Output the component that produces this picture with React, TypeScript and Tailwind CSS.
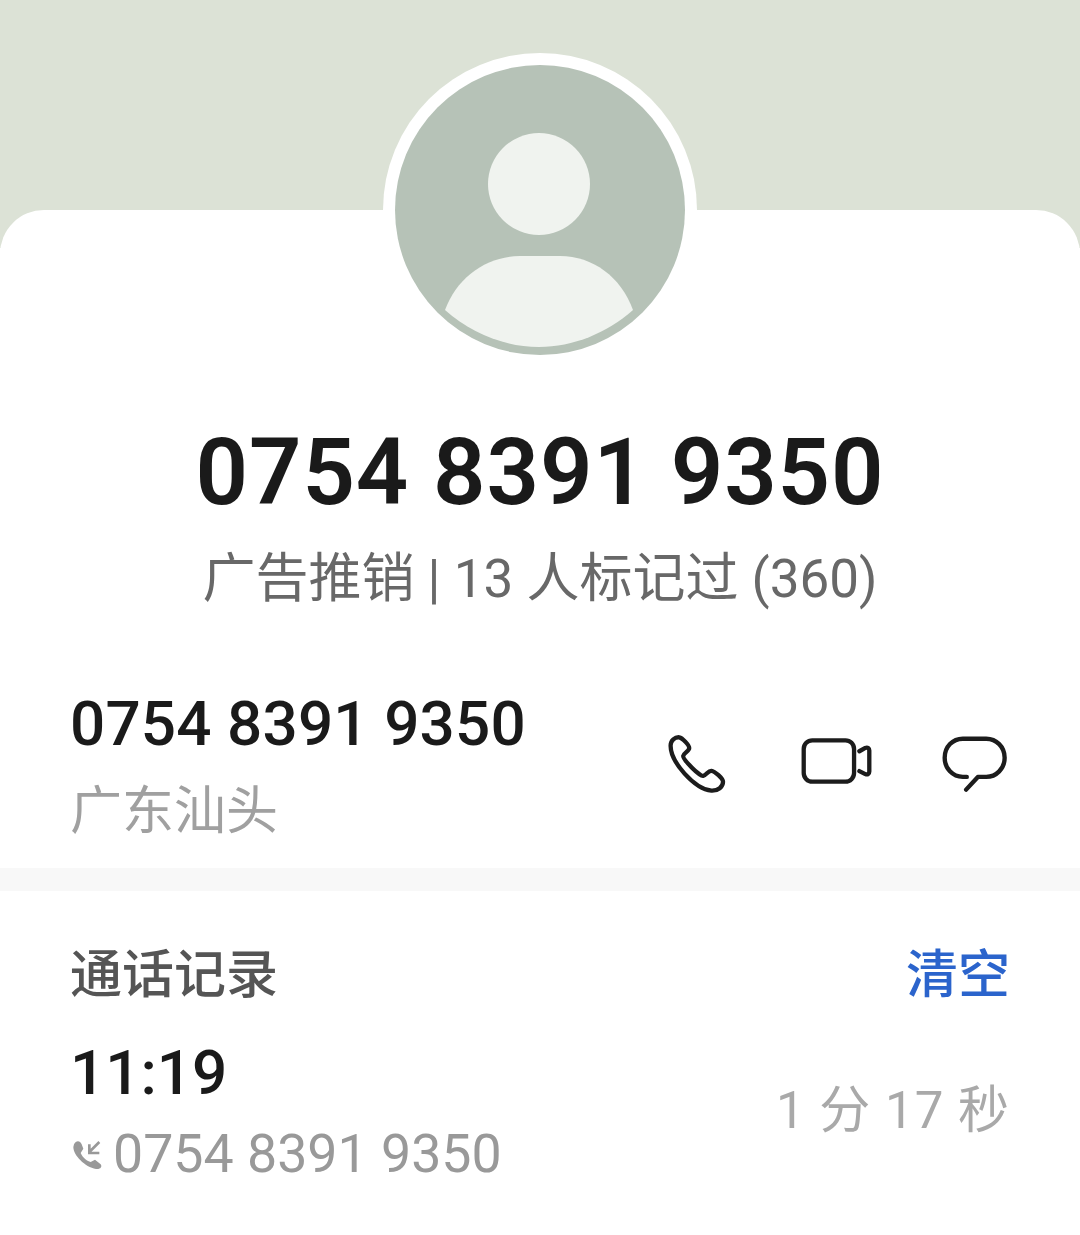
const fontStack = "font-['Roboto','Noto_Sans_CJK_SC',sans-serif]";

function Avatar() {
    return (
        <div className="w-[314px] h-[314px] rounded-full bg-white flex items-center justify-center">
            <svg width="290" height="290" viewBox="0 0 290 290">
                <circle cx="145" cy="145" r="145" fill="#b6c2b7" />
                <circle cx="144" cy="119" r="51" fill="#f0f3ef" />
                <path d="M50 245C62 212 92 191 125 191H165C198 191 226 212 238 245C212 268 178 282 144 282C110 282 76 268 50 245Z" fill="#f0f3ef" />
            </svg>
        </div>
    );
}

function PhoneIcon() {
    return (
        <svg width="67" height="63" viewBox="70 60 200 190" fill="none" stroke="#1c1c1c" strokeWidth="13" strokeLinejoin="round">
            <path d="M92 100C92 85 105 75 118 76C128 78 148 100 148 108C148 118 132 122 130 132C128 142 180 195 190 192C200 190 205 176 215 177C225 178 250 200 250 210C250 225 235 238 215 237C165 232 90 150 92 100Z" />
        </svg>
    );
}

function VideoIcon() {
    return (
        <svg width="73" height="53" viewBox="480 85 220 160" fill="none" stroke="#1c1c1c" strokeWidth="13" strokeLinecap="round" strokeLinejoin="round">
            <rect x="488" y="95" width="152" height="125" rx="26" />
            <path d="M656 128L674 118C681 115 686 119 686 126V189C686 196 681 200 674 197L656 188" />
        </svg>
    );
}

function ChatIcon() {
    return (
        <svg width="67" height="57" viewBox="905 75 200 170" fill="none" stroke="#1c1c1c" strokeWidth="13" strokeLinecap="round" strokeLinejoin="round">
            <path d="M982 200H970C940 200 916 175 916 143C916 110 940 86 970 86H1040C1070 86 1095 110 1095 143C1095 175 1070 200 1040 200H1015L980 238" />
        </svg>
    );
}

function IncomingIcon() {
    return (
        <svg width="35" height="35" viewBox="60 40 105 105">
            <path d="M72 62C78 50 90 50 95 62L100 75L92 88C100 105 112 112 122 115L135 108L152 122C158 130 150 138 138 136C105 130 70 95 70 70Z" fill="#999999" />
            <path d="M148 55L118 85M118 62V88H148" fill="none" stroke="#999999" strokeWidth="8" />
        </svg>
    );
}

export default function App() {
    return (
        <div className={`w-[1080px] h-[1235px] bg-white overflow-hidden ${fontStack}`}>
            {/* Header band */}
            <div className="h-[248px] bg-[#dce2d6]" />

            {/* Card */}
            <div className="-mt-[38px] bg-white rounded-t-[44px] flex flex-col">
                <div className="flex justify-center -mt-[157px]">
                    <Avatar />
                </div>

                <div className="flex flex-col items-center">
                    <h1 className="mt-[48px] text-[92px] leading-[116px] font-semibold text-[#1a1a1a] tracking-[0.9px]">0754 8391 9350</h1>
                    <p className="mt-[16px] text-[53px] leading-[64px] text-[#686868]">广告推销 | 13 人标记过 (360)</p>
                </div>

                <div className="mt-[77px] pl-[70px] pr-[72px] flex items-center justify-between">
                    <div>
                        <p className="text-[62px] leading-[72px] font-medium text-[#1a1a1a] tracking-[0.15px]">0754 8391 9350</p>
                        <p className="mt-[22px] text-[52px] leading-[60px] text-[#a0a0a0]">广东汕头</p>
                    </div>
                    <div className="flex items-center -mt-[4px]">
                        <PhoneIcon />
                        <div className="ml-[71px] mr-[67px]">
                            <VideoIcon />
                        </div>
                        <ChatIcon />
                    </div>
                </div>

                <div className="mt-[26px] h-[23px] bg-[#f8f8f8]" />

                <div className="mt-[55px] px-[70px]">
                    <div className="flex items-center justify-between">
                        <p className="text-[52px] leading-[60px] font-medium text-[#555555]">通话记录</p>
                        <p className="text-[52px] leading-[60px] font-medium text-[#2b64cc]">清空</p>
                    </div>
                    <div className="mt-[32px] flex items-center justify-between">
                        <div>
                            <p className="text-[62px] leading-[70px] font-medium text-[#1a1a1a]">11:19</p>
                            <div className="mt-[16px] flex items-center gap-[8px]">
                                <IncomingIcon />
                                <span className="text-[53.7px] leading-[60px] text-[#999999]">0754 8391 9350</span>
                            </div>
                        </div>
                        <p className="text-[51px] leading-[60px] text-[#a9a9a9] tracking-[1px]">1 分 17 秒</p>
                    </div>
                </div>
            </div>
        </div>
    );
}
